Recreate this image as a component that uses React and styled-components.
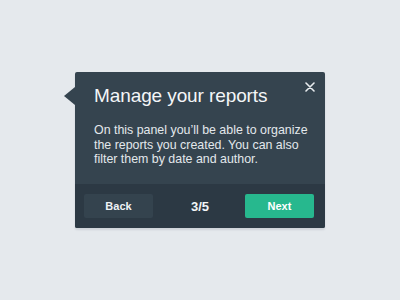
import React from "react";
import styled, { createGlobalStyle } from "styled-components";

const GlobalStyle = createGlobalStyle`
  html, body {
    margin: 0;
    padding: 0;
    background: #e5e9ed;
  }
  body {
    font-family: "Liberation Sans", Arial, sans-serif;
    -webkit-font-smoothing: antialiased;
  }
`;

const Page = styled.div`
  width: 400px;
  height: 300px;
  display: flex;
  align-items: center;
  justify-content: center;
`;

const Popover = styled.div`
  position: relative;
  width: 250px;
  background: #35444f;
  border-radius: 2px;
  box-shadow: 0 2px 2px rgba(40, 55, 70, 0.12);

  &::before {
    content: "";
    position: absolute;
    left: -11px;
    top: 15px;
    border-top: 9px solid transparent;
    border-bottom: 9px solid transparent;
    border-right: 11px solid #35444f;
  }
`;

const Content = styled.div`
  position: relative;
  padding: 13px 12px 20px 19px;
  height: 112px;
  box-sizing: border-box;
`;

const Title = styled.h2`
  margin: 0;
  font-size: 19px;
  line-height: 22px;
  font-weight: 400;
  color: #f4f6f8;
  letter-spacing: -0.1px;
`;

const Text = styled.p`
  margin: 16px 0 0;
  font-size: 12.4px;
  line-height: 14.6px;
  color: #e3e8ec;
`;

const Close = styled.button`
  position: absolute;
  top: 10px;
  right: 10px;
  width: 10px;
  height: 10px;
  padding: 0;
  border: none;
  background: none;
  display: flex;
  cursor: pointer;
`;

const Footer = styled.div`
  display: flex;
  align-items: center;
  justify-content: space-between;
  padding: 10px 11px 10px 9px;
  background: #2c3944;
  border-radius: 0 0 2px 2px;
`;

const Button = styled.button`
  width: 69px;
  height: 24px;
  border: none;
  border-radius: 2px;
  font-family: inherit;
  font-size: 11px;
  font-weight: 700;
  color: ${(p) => (p.$primary ? "#ffffff" : "#eef1f4")};
  background: ${(p) => (p.$primary ? "#27b88e" : "#34434e")};
  cursor: pointer;
`;

const Step = styled.span`
  font-size: 13px;
  font-weight: 700;
  color: #f2f5f7;
  margin-left: 2px;
`;

export default function App() {
  return (
    <>
      <GlobalStyle />
      <Page>
        <Popover>
          <Content>
            <Title>Manage your reports</Title>
            <Text>
              On this panel you’ll be able to organize the reports you created.
              You can also filter them by date and author.
            </Text>
            <Close aria-label="Close">
              <svg width="10" height="10" viewBox="0 0 10 10">
                <path
                  d="M1 1L9 9M9 1L1 9"
                  stroke="#e8ecef"
                  strokeWidth="1.6"
                  strokeLinecap="round"
                />
              </svg>
            </Close>
          </Content>
          <Footer>
            <Button>Back</Button>
            <Step>3/5</Step>
            <Button $primary>Next</Button>
          </Footer>
        </Popover>
      </Page>
    </>
  );
}
